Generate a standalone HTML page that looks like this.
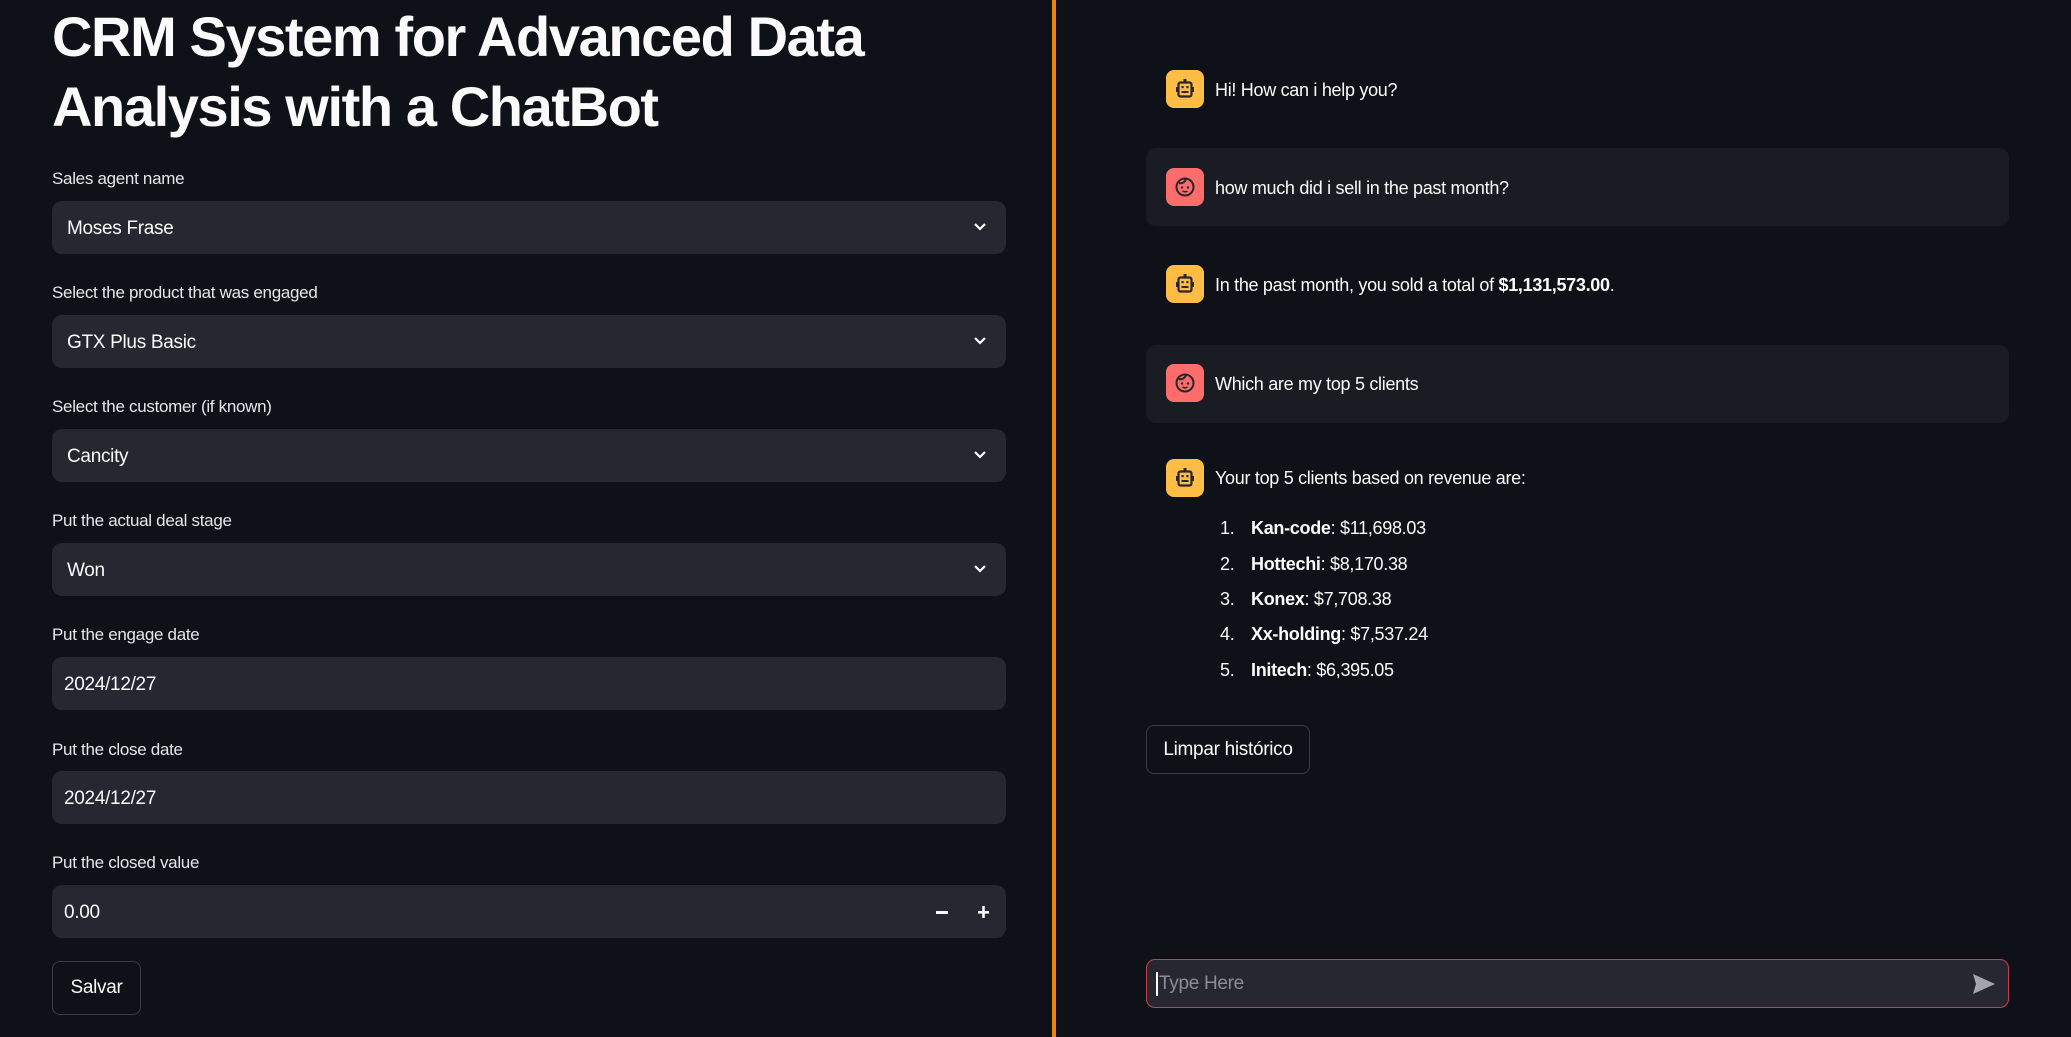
<!DOCTYPE html>
<html><head><meta charset="utf-8"><style>
*{margin:0;padding:0;box-sizing:border-box}
body{width:2071px;height:1037px;background:#0e1117;color:#fafafa;font-family:"Liberation Sans",sans-serif;position:relative;overflow:hidden}
.abs{position:absolute}
h1{position:absolute;left:52px;top:2px;font-size:56px;line-height:70px;font-weight:bold;letter-spacing:-1.4px;color:#fafafa}
.lbl{position:absolute;left:52px;font-size:17px;color:#e6e6ea;letter-spacing:-0.3px}
.box{position:absolute;left:52px;width:954px;height:53px;background:#262730;border-radius:10px;font-size:19px;line-height:55px;padding-left:15px;color:#fafafa;letter-spacing:-0.3px}
.box.in{padding-left:12px}
.chev{position:absolute;right:18px;top:19px}
.div{position:absolute;left:1052px;top:0;width:4px;height:1037px;background:#e8850f}
.msg{position:absolute;left:1146px;width:863px;height:78px;border-radius:10px}
.user{background:#1a1c24}
.av{position:absolute;left:1166px;width:38px;height:38px;border-radius:8px;display:flex;align-items:center;justify-content:center}
.bot{background:#ffbd45}.usr{background:#ff6c6c}
.t{position:absolute;left:1215px;font-size:18px;letter-spacing:-0.3px;color:#fafafa;line-height:26px}
.li{position:absolute;font-size:18px;letter-spacing:-0.3px;line-height:26px}
.btn{position:absolute;border:1px solid #3a3c46;border-radius:8px;background:#0e1117;font-size:19px;letter-spacing:-0.3px;display:flex;align-items:center;justify-content:center}
</style></head><body>
<h1>CRM System for Advanced Data<br>Analysis with a ChatBot</h1>

<div class="lbl" style="top:169px">Sales agent name</div>
<div class="box" style="top:201px">Moses Frase<svg class="chev" width="16" height="14" viewBox="0 0 16 14"><path d="M3 4l5 5 5-5" stroke="#fafafa" stroke-width="2.2" fill="none"/></svg></div>
<div class="lbl" style="top:283px">Select the product that was engaged</div>
<div class="box" style="top:315px">GTX Plus Basic<svg class="chev" width="16" height="14" viewBox="0 0 16 14"><path d="M3 4l5 5 5-5" stroke="#fafafa" stroke-width="2.2" fill="none"/></svg></div>
<div class="lbl" style="top:397px">Select the customer (if known)</div>
<div class="box" style="top:429px">Cancity<svg class="chev" width="16" height="14" viewBox="0 0 16 14"><path d="M3 4l5 5 5-5" stroke="#fafafa" stroke-width="2.2" fill="none"/></svg></div>
<div class="lbl" style="top:511px">Put the actual deal stage</div>
<div class="box" style="top:543px">Won<svg class="chev" width="16" height="14" viewBox="0 0 16 14"><path d="M3 4l5 5 5-5" stroke="#fafafa" stroke-width="2.2" fill="none"/></svg></div>
<div class="lbl" style="top:625px">Put the engage date</div>
<div class="box in" style="top:657px">2024/12/27</div>
<div class="lbl" style="top:740px">Put the close date</div>
<div class="box in" style="top:771px">2024/12/27</div>
<div class="lbl" style="top:853px">Put the closed value</div>
<div class="box in" style="top:885px">0.00
<svg class="abs" style="left:884px;top:26px" width="14" height="4"><rect width="12" height="3" fill="#fafafa"/></svg>
<svg class="abs" style="left:926px;top:21px" width="14" height="14"><rect x="0" y="5" width="11" height="2.6" fill="#fafafa"/><rect x="4.2" y="0" width="2.6" height="12" fill="#fafafa"/></svg>
</div>
<div class="btn" style="left:52px;top:961px;width:89px;height:54px">Salvar</div>

<div class="div"></div>

<div class="av bot" style="top:70px"><svg width="24" height="24" viewBox="0 0 24 24"><rect x="10.5" y="2" width="3" height="3" fill="#262730"/><rect x="5.5" y="5.5" width="13" height="14" rx="2" fill="none" stroke="#262730" stroke-width="2.2"/><rect x="3" y="10" width="2.5" height="5" fill="#262730"/><rect x="18.5" y="10" width="2.5" height="5" fill="#262730"/><rect x="8.5" y="9" width="2.2" height="2.2" fill="#262730"/><rect x="13.3" y="9" width="2.2" height="2.2" fill="#262730"/><rect x="8.5" y="14" width="7" height="2" fill="#262730"/></svg></div>
<div class="t" style="top:77px">Hi! How can i help you?</div>

<div class="msg user" style="top:148px"></div>
<div class="av usr" style="top:168px"><svg width="24" height="24" viewBox="0 0 24 24"><circle cx="12" cy="12" r="8.5" fill="none" stroke="#262730" stroke-width="2"/><path d="M6 8c3 1 6-1 7-4" stroke="#262730" stroke-width="2" fill="none"/><circle cx="9" cy="12.5" r="1.2" fill="#262730"/><circle cx="15" cy="12.5" r="1.2" fill="#262730"/><path d="M9.5 16c1.5 1 3.5 1 5 0" stroke="#262730" stroke-width="1.6" fill="none"/></svg></div>
<div class="t" style="top:175px">how much did i sell in the past month?</div>

<div class="av bot" style="top:265px"><svg width="24" height="24" viewBox="0 0 24 24"><rect x="10.5" y="2" width="3" height="3" fill="#262730"/><rect x="5.5" y="5.5" width="13" height="14" rx="2" fill="none" stroke="#262730" stroke-width="2.2"/><rect x="3" y="10" width="2.5" height="5" fill="#262730"/><rect x="18.5" y="10" width="2.5" height="5" fill="#262730"/><rect x="8.5" y="9" width="2.2" height="2.2" fill="#262730"/><rect x="13.3" y="9" width="2.2" height="2.2" fill="#262730"/><rect x="8.5" y="14" width="7" height="2" fill="#262730"/></svg></div>
<div class="t" style="top:272px">In the past month, you sold a total of <b>$1,131,573.00</b>.</div>

<div class="msg user" style="top:345px"></div>
<div class="av usr" style="top:364px"><svg width="24" height="24" viewBox="0 0 24 24"><circle cx="12" cy="12" r="8.5" fill="none" stroke="#262730" stroke-width="2"/><path d="M6 8c3 1 6-1 7-4" stroke="#262730" stroke-width="2" fill="none"/><circle cx="9" cy="12.5" r="1.2" fill="#262730"/><circle cx="15" cy="12.5" r="1.2" fill="#262730"/><path d="M9.5 16c1.5 1 3.5 1 5 0" stroke="#262730" stroke-width="1.6" fill="none"/></svg></div>
<div class="t" style="top:371px">Which are my top 5 clients</div>

<div class="av bot" style="top:459px"><svg width="24" height="24" viewBox="0 0 24 24"><rect x="10.5" y="2" width="3" height="3" fill="#262730"/><rect x="5.5" y="5.5" width="13" height="14" rx="2" fill="none" stroke="#262730" stroke-width="2.2"/><rect x="3" y="10" width="2.5" height="5" fill="#262730"/><rect x="18.5" y="10" width="2.5" height="5" fill="#262730"/><rect x="8.5" y="9" width="2.2" height="2.2" fill="#262730"/><rect x="13.3" y="9" width="2.2" height="2.2" fill="#262730"/><rect x="8.5" y="14" width="7" height="2" fill="#262730"/></svg></div>
<div class="t" style="top:465px">Your top 5 clients based on revenue are:</div>

<div class="li" style="left:1220px;top:515px">1.</div><div class="li" style="left:1251px;top:515px"><b>Kan-code</b>: $11,698.03</div>
<div class="li" style="left:1220px;top:551px">2.</div><div class="li" style="left:1251px;top:551px"><b>Hottechi</b>: $8,170.38</div>
<div class="li" style="left:1220px;top:586px">3.</div><div class="li" style="left:1251px;top:586px"><b>Konex</b>: $7,708.38</div>
<div class="li" style="left:1220px;top:621px">4.</div><div class="li" style="left:1251px;top:621px"><b>Xx-holding</b>: $7,537.24</div>
<div class="li" style="left:1220px;top:657px">5.</div><div class="li" style="left:1251px;top:657px"><b>Initech</b>: $6,395.05</div>

<div class="btn" style="left:1146px;top:725px;width:164px;height:49px">Limpar histórico</div>

<div class="abs" style="left:1146px;top:959px;width:863px;height:49px;background:#262730;border:1.5px solid #c5404a;border-radius:9px">
<div class="abs" style="left:9px;top:12px;width:2px;height:24px;background:#fafafa"></div>
<div class="abs" style="left:12px;top:13px;font-size:19px;color:#8b8d96;letter-spacing:-0.3px">Type Here</div>
<svg class="abs" style="right:12px;top:13px" width="24" height="22" viewBox="0 0 24 22"><path d="M1 1L23 11 1 21 4 11z" fill="#a3a5ae"/></svg>
</div>
</body></html>
